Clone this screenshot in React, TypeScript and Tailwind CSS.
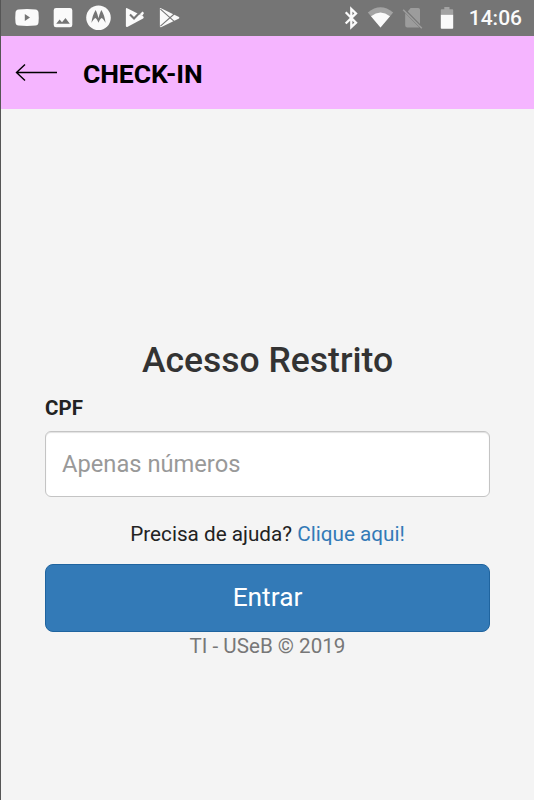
import type { ReactNode } from 'react'

interface IconProps {
  width: number
  className?: string
  children: ReactNode
}

// Every status icon shares the bar's 36px height, so paths use bar coordinates vertically.
function StatusIcon({ width, className = '', children }: IconProps) {
  return (
    <svg
      width={width}
      height="36"
      viewBox={`0 0 ${width} 36`}
      fill="#fafafa"
      aria-hidden="true"
      className={`shrink-0 ${className}`}
    >
      {children}
    </svg>
  )
}

function StatusBar() {
  return (
    <div className="flex h-[35.5px] items-center bg-[#757575] pr-3 pl-[14px]">
      <StatusIcon width={24}>
        <path
          fillRule="evenodd"
          d="M3.5 9.4Q12 8.6 20.5 9.4Q23.2 9.6 23.5 12.5Q24 17.5 23.5 22.5Q23.2 25.4 20.5 25.6Q12 26.4 3.5 25.6Q.8 25.4 .5 22.5Q0 17.5 .5 12.5Q.8 9.6 3.5 9.4ZM9.8 14V21L15 17.5Z"
        />
      </StatusIcon>
      <StatusIcon width={20} className="ml-[14px]">
        <path
          fillRule="evenodd"
          d="M3 8H17Q19.3 8 19.3 10.2V25Q19.3 27.2 17 27.2H3Q.7 27.2 .7 25V10.2Q.7 8 3 8ZM3.2 23.8H16.8L12.5 18L9 22.3L6.6 19.5Z"
        />
      </StatusIcon>
      <StatusIcon width={26} className="ml-[13px]">
        <circle cx="12.5" cy="17.7" r="12.3" />
        <path
          fill="#757575"
          d="M5.4 23C6 18.2 7.3 13.8 9.6 10C11 12.6 11.9 15.4 12.5 18.3C13.1 15.4 14 12.6 15.4 10C17.7 13.8 19 18.2 19.6 23C18.6 20.6 17.1 18.7 15.6 17.9C14.4 18.7 13.3 20.4 12.5 22.8C11.7 20.4 10.6 18.7 9.4 17.9C7.9 18.7 6.4 20.6 5.4 23Z"
        />
      </StatusIcon>
      <StatusIcon width={20} className="ml-[13px]">
        <path d="M1.7 8.1L18.1 16.2Q19.5 17.2 18.1 18.5L2.3 27Q1 27.4 .9 26V9Q.9 7.9 1.7 8.1Z" />
        <path d="M5 14.6L9 18.6L14.8 12.6" fill="none" stroke="#757575" strokeWidth="2.1" />
        <path d="M14.8 14.2L17.5 11.4L19 13L17 16.2Z" />
      </StatusIcon>
      <StatusIcon width={22} className="ml-[14px]">
        <path d="M1.5 8.1L20 17.1Q20.8 17.7 20 18.4L2 27.2Q.9 27.5 .9 26.2V8.6Q.9 7.9 1.5 8.1Z" />
        <path
          d="M1.4 9.2L15.2 21.4M1.4 26.2L15.2 14"
          fill="none"
          stroke="#757575"
          strokeWidth="1.1"
        />
      </StatusIcon>

      <StatusIcon width={16} className="ml-auto">
        <path
          d="M1.7 12.2L12 22.6L7.3 27V9L12 13.4L1.7 23.5"
          fill="none"
          stroke="#fafafa"
          strokeWidth="2.3"
        />
      </StatusIcon>
      <StatusIcon width={28} className="ml-[7px]">
        <path d="M.8 12.4Q13.5 2 26.2 12.4L13.5 27.5Z" opacity=".35" />
        <path d="M4 16.2Q13.5 9 23 16.2L13.5 27.5Z" />
      </StatusIcon>
      <StatusIcon width={22} className="ml-[7px]">
        <path
          d="M8.6 8H16.2Q18 8 18 9.8V24L5.8 11.6ZM3.2 13.2L17.3 27.4H5Q3.2 27.4 3.2 25.6Z"
          opacity=".3"
        />
        <path d="M1.2 9.8L19.8 28.2" stroke="#fafafa" strokeWidth="1.6" opacity=".3" />
      </StatusIcon>
      <StatusIcon width={14} className="ml-[16px]">
        <path d="M4.3 7H9.5V9.2H12.4Q13.2 9.2 13.2 10V14.8H.8V10Q.8 9.2 1.6 9.2H4.3Z" opacity=".35" />
        <path d="M.8 14.8H13.2V28Q13.2 28.8 12.4 28.8H1.6Q.8 28.8 .8 28Z" />
      </StatusIcon>
      <span className="ml-[15px] pt-px text-[21px] leading-9 font-medium text-[#fafafa]">14:06</span>
    </div>
  )
}

function Header() {
  return (
    <header className="flex h-[73px] items-center bg-[#f5b5ff] pt-px pl-[14px]">
      <button type="button" aria-label="Voltar">
        <svg width="42" height="18" viewBox="0 0 42 18" fill="none" stroke="#000" strokeWidth="1.4">
          <path d="M42 8.5H1.5M10 .5L1.5 8.5L10 16.5" />
        </svg>
      </button>
      <h1 className="ml-[26px] pt-[2px] text-[26.5px] leading-8 font-bold tracking-[-0.1px] text-black">
        CHECK-IN
      </h1>
    </header>
  )
}

export default function App() {
  return (
    <div className="h-[800px] w-[534px] overflow-hidden border-l border-[#555] bg-[#f4f4f4] font-['Roboto',sans-serif]">
      <StatusBar />
      <Header />
      <main className="flex flex-col pt-[229.5px] pr-[44px] pl-[44px]">
        <h2 className="text-center text-[35.5px] leading-[44px] font-medium text-[#333]">
          Acesso Restrito
        </h2>
        <label htmlFor="cpf" className="mt-3 text-[20.5px] leading-7 font-bold text-[#222]">
          CPF
        </label>
        <input
          id="cpf"
          type="text"
          inputMode="numeric"
          placeholder="Apenas números"
          className="mt-[9px] h-[66px] w-full rounded-md border border-[#c4c4c4] bg-white px-4 text-[23.7px] shadow-[inset_0_1px_1px_rgba(0,0,0,0.12)] placeholder:text-[#999]"
        />
        <p className="mt-[22px] text-center text-[20.7px] leading-[30px] text-[#222]">
          Precisa de ajuda?{' '}
          <a href="#" className="text-[#337ab7]">
            Clique aqui!
          </a>
        </p>
        <button
          type="button"
          className="mt-[15px] h-[67.5px] w-full rounded-lg border border-[#1f649f] bg-[#337ab7] text-[26.3px] text-white"
        >
          Entrar
        </button>
        <p className="text-center text-[20.6px] leading-7 text-[#777]">TI - USeB © 2019</p>
      </main>
    </div>
  )
}
